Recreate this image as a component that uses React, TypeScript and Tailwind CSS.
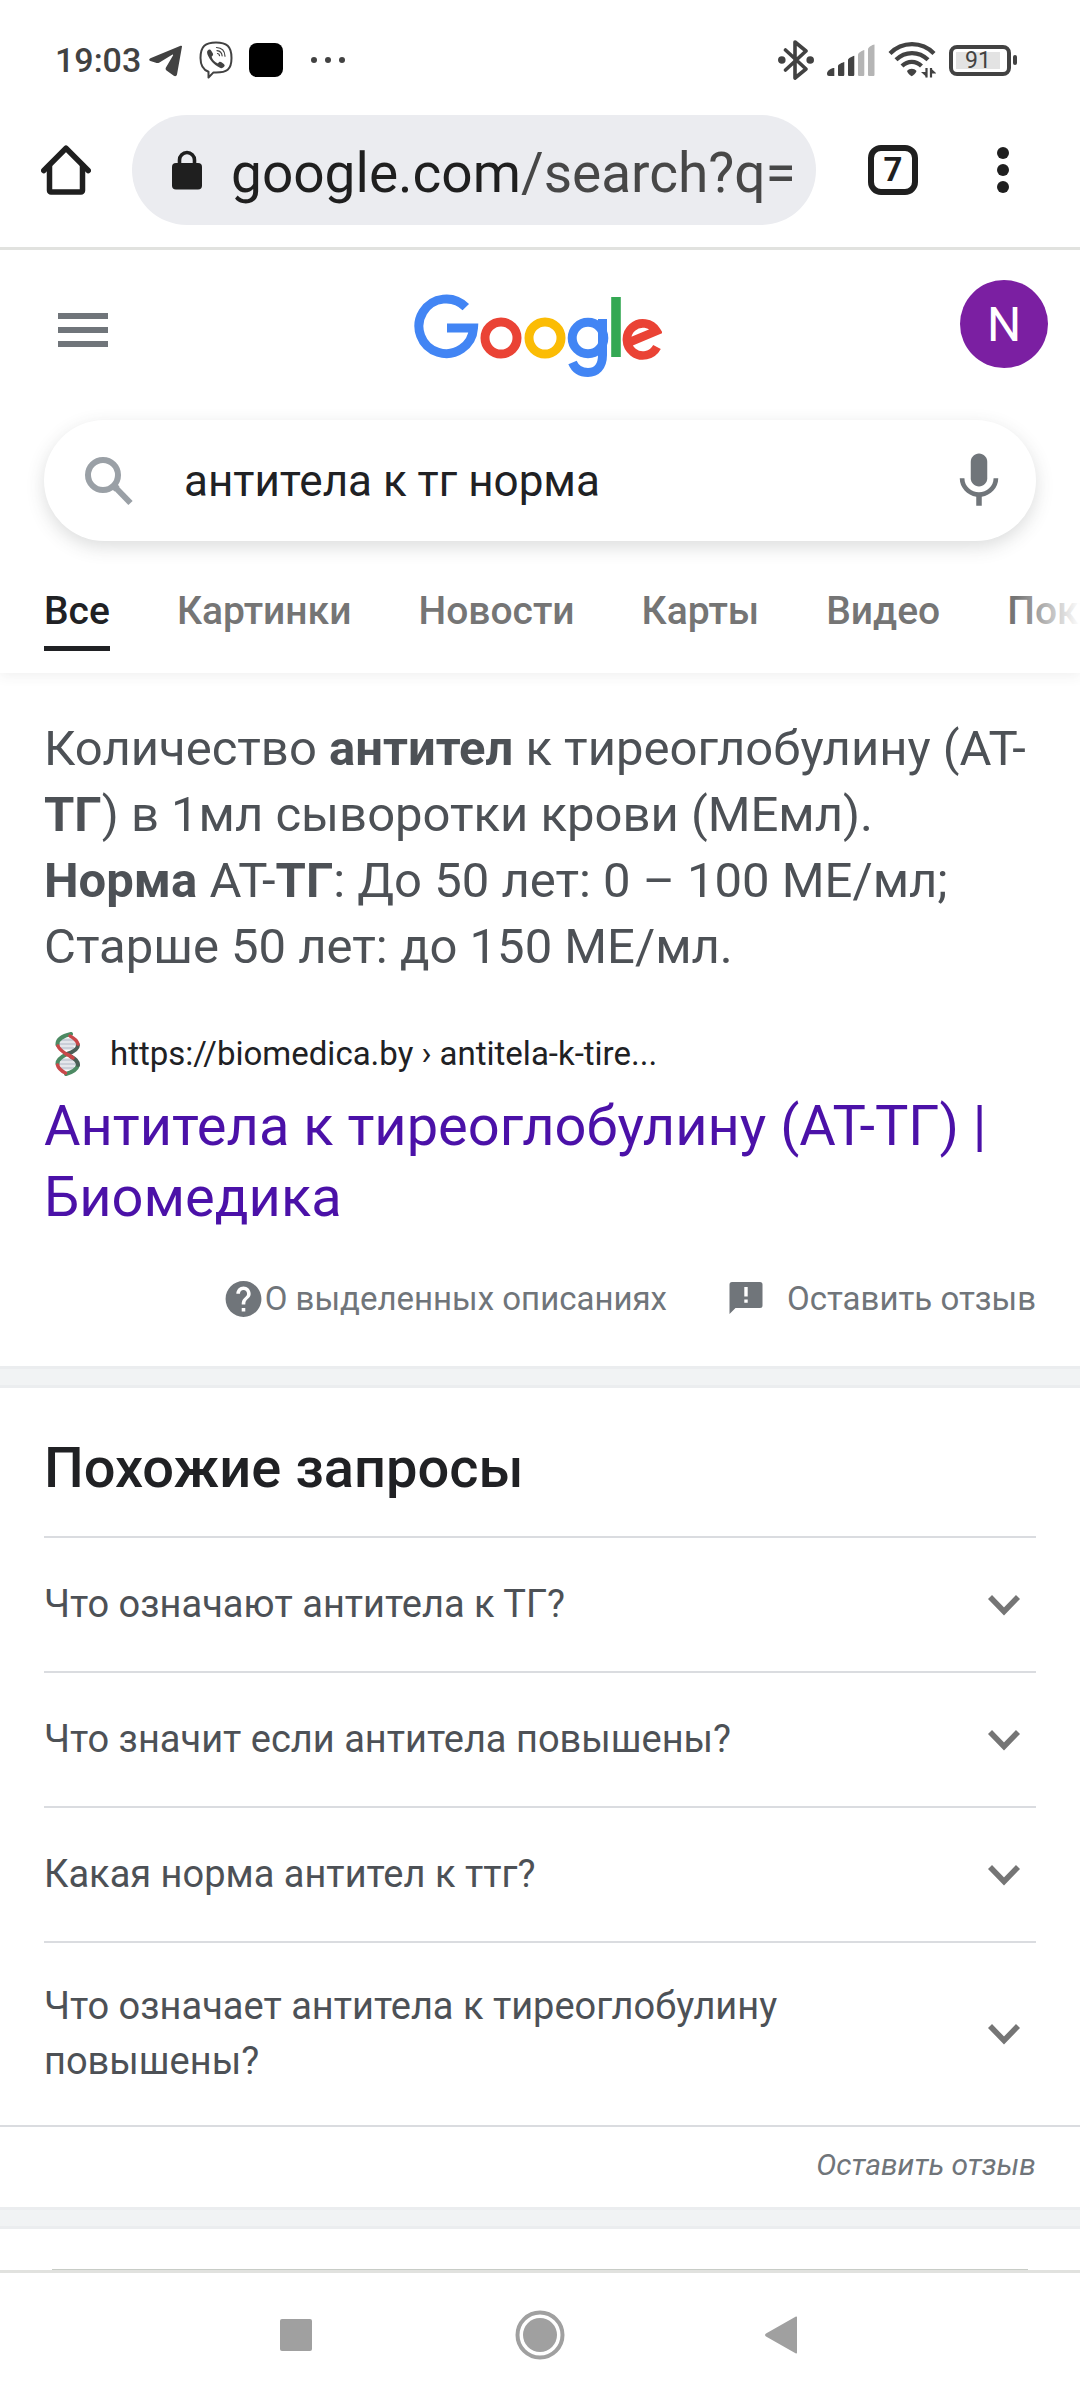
import { useState } from "react";

const tabs = ["Все", "Картинки", "Новости", "Карты", "Видео", "Покупки"];

const questions = [
  "Что означают антитела к ТГ?",
  "Что значит если антитела повышены?",
  "Какая норма антител к ттг?",
  "Что означает антитела к тиреоглобулину повышены?",
];

const StatusBar = () => (
  <div className="flex h-[93px] items-center justify-between pl-[55px] pr-[63px] pt-[27px] text-[#424242]">
    <div className="flex items-center gap-4">
      <span className="-mr-2 text-[34px] leading-10 font-medium">19:03</span>
      <svg className="h-[36px] w-[34px]" viewBox="0 0 34 36" fill="currentColor">
        <path d="M33 4.5 28 32.500c-.4 1.600-1.800 2.200-3.200 1.300L17.500 28.500c-1-.8-1.200-2.200-.4-3.200L24 13.500c.4-.7-.2-1.200-.9-.8L10.500 20.400c-1.200.7-2.400.8-3.600.4L1.400 19c-1.600-.6-1.700-2 0-2.800L31 4c1.300-.6 2.300-.3 2 .5z" />
      </svg>
      <svg className="h-[38px] w-[34px]" viewBox="0 0 34 38" fill="none" stroke="currentColor" strokeLinecap="round" strokeLinejoin="round">
        <path d="M17 1.500c10.500 0 15.500 3.500 15.500 15.500S27.500 31.500 17 31.500l-2.500-.1L9.500 36.500v-5.800C4 28.800 1.500 25 1.500 17 1.500 5 6.500 1.500 17 1.500z" strokeWidth="2" />
        <path d="M8.200 10.300c1.500-2.300 3-2.300 4.200-.3l1.500 2.600c.6 1.300-.2 2.300-1.300 3.200 1 3 3 5.400 6.300 6.600 1.200-1.700 2.200-2 3.600-1.100l2.300 1.700c1.600 1.200.9 2.600-.7 3.600-1.300.8-2.300.7-3.600 0-6-3-9.600-7.300-12-13-.4-1.200-.6-2.200-.3-3.300z" fill="currentColor" stroke="none" />
        <path d="M17.500 6.500c5 .3 8.300 3.500 8.500 8.700M18 9.600c3 .3 4.900 2.200 5.100 5.200M18.500 12.500c1.300.2 1.900.9 2 2.100" strokeWidth="1.200" />
      </svg>
      <div className="h-[34px] w-[34px] rounded-lg bg-black" />
      <svg className="ml-3 h-2 w-[34px]" viewBox="0 0 34 8" fill="currentColor">
        <circle cx="3" cy="4" r="3" />
        <circle cx="17" cy="4" r="3" />
        <circle cx="31" cy="4" r="3" />
      </svg>
    </div>

    <div className="flex items-center gap-[13px]">
      <svg className="h-10 w-9" viewBox="0 0 36 40" fill="none" stroke="currentColor" strokeWidth="3.600" strokeLinecap="round" strokeLinejoin="round">
        <path d="M7.500 10 28 29 17 38V2L28 11 7.500 30" />
        <circle cx="3.800" cy="20" r="2" fill="currentColor" />
        <circle cx="32.200" cy="20" r="2" fill="currentColor" />
      </svg>
      <svg className="h-8 w-12" viewBox="0 0 48 32" fill="currentColor">
        <path d="M0 29.500c0-3 4-5.500 7.300-5.500v8H2c-1.200 0-2-.8-2-2.500z" />
        <path d="M11 22c0-1.500 4-3.500 6.300-4v12.500c0 1-.5 1.500-1.500 1.500h-3.300c-1 0-1.500-.5-1.500-1.500z" />
        <path d="M21 16c0-1.500 4-3.700 6.300-4.200v18.700c0 1-.5 1.500-1.500 1.500h-3.300c-1 0-1.500-.5-1.500-1.500z" />
        <path fill="#b5b5b5" d="M31 10.500C31 9 35 6.500 37.300 6v24.500c0 1-.5 1.500-1.500 1.500h-3.300c-1 0-1.500-.5-1.500-1.500z" />
        <path fill="#b5b5b5" d="M41 5c0-1.500 4-4.200 6.500-4.500v30c0 1-.5 1.500-1.500 1.500h-3.500c-1 0-1.500-.5-1.500-1.500z" />
      </svg>
      <svg className="h-9 w-12" viewBox="0 0 48 36" fill="none" stroke="currentColor" strokeWidth="4.200">
        <path d="M2 11.500C14-1 34-1 46 11.500" />
        <path d="M8 17.800c9-9 23-9 32 0" />
        <path d="M14 24c5.600-5.500 14-5.500 19.500 0" />
        <path d="M19 29c2.500-3 7-3 9.500 0-.5 2-2.800 4.200-4.800 5.200-2-1-4.200-3.200-4.700-5.200z" fill="currentColor" stroke="none" />
        <path d="M38.500 26v9.500M43 35.500V26" strokeWidth="2.200" />
        <path d="M39 35.500 33 30h6zM42.500 26l6 5.500h-6z" fill="currentColor" stroke="none" />
      </svg>
      <div className="flex w-[68px] items-center gap-0.5">
        <div className="flex h-[31px] w-[62px] rounded-[8px] border-4 border-[#424242] p-[3px]">
          <div className="flex w-11 items-center justify-center bg-[#e3e3e3] pt-0.5 text-[23px]">
            <span>91</span>
          </div>
        </div>
        <div className="h-2.5 w-1 rounded-sm bg-[#424242]" />
      </div>
    </div>
  </div>
);

const BrowserBar = () => (
  <div className="flex h-[157px] items-center border-b-3 border-[#e1e2df] pl-[41px] pr-[52px] text-[#1f1f1f]">
    <button aria-label="Главная страница" className="mr-[41px]">
      <svg className="h-[50px] w-[50px]" viewBox="0 0 50 50" fill="none" stroke="currentColor" strokeWidth="5.500" strokeLinejoin="round" strokeLinecap="round">
        <path d="M2.800 25.500 25 3.200l22.200 22.300" />
        <path d="M8.500 21v24.500a1.500 1.500 0 0 0 1.500 1.500h30a1.500 1.500 0 0 0 1.500-1.500V21" />
      </svg>
    </button>
    <button className="flex h-[110px] flex-1 items-center gap-[29px] overflow-hidden rounded-full bg-[#ebecf0] pl-10 text-left">
      <svg className="h-10 w-[30px] shrink-0" viewBox="0 0 30 40">
        <path d="M7.500 15V10a7.500 7.500 0 0 1 15 0v5" fill="none" stroke="currentColor" strokeWidth="3.600" />
        <rect y="13" width="30" height="26.500" rx="4" fill="currentColor" />
      </svg>
      <span className="pt-1.5 text-[55px] leading-[64px] whitespace-nowrap">
        google.com<span className="text-[#474747]">/search?q=</span>
      </span>
    </button>
    <button aria-label="Вкладки" className="ml-[52px] flex h-[50px] w-[50px] items-center justify-center rounded-[13px] border-6 border-[#1f1f1f] text-[33px] font-bold">
      7
    </button>
    <button aria-label="Меню" className="ml-[60px] flex h-[50px] w-[50px] flex-col items-center justify-center gap-[5px]">
      <span className="h-3 w-3 rounded-full bg-[#1f1f1f]" />
      <span className="h-3 w-3 rounded-full bg-[#1f1f1f]" />
      <span className="h-3 w-3 rounded-full bg-[#1f1f1f]" />
    </button>
  </div>
);

const GoogleLogo = () => (
  <svg role="img" aria-label="Google" className="h-[84px] w-[248px]" viewBox="0 0 248 84" fill="none" strokeWidth="9">
    <path stroke="#4285f4" d="M51.800 13.200A27.300 27.300 0 1 0 59.500 34H33" />
    <circle stroke="#ea4335" cx="87" cy="44" r="16" />
    <circle stroke="#fbbc05" cx="131" cy="44" r="16" />
    <circle stroke="#4285f4" cx="174" cy="44" r="15.800" />
    <path stroke="#4285f4" d="M188.500 25v36c0 12-6.500 17.500-14.500 17.500-7.500 0-13-4-15.500-10" />
    <path stroke="#34a853" strokeWidth="9.600" d="M202 3v60" />
    <path stroke="#ea4335" strokeWidth="8.600" d="M243 53a16 16 0 1 1-.5-16L216 48" />
  </svg>
);

const SearchHeader = () => {
  const [query, setQuery] = useState("антитела к тг норма");
  const [active, setActive] = useState("Все");

  return (
    <header className="shadow-[0_3px_12px_rgba(60,64,67,0.08)]">
      <div className="flex h-[150px] items-start justify-between pl-[58px] pr-8 pt-[30px]">
        {/* same width as the avatar keeps the logo centred */}
        <button aria-label="Главное меню" className="flex h-[100px] w-[88px] flex-col justify-center gap-2 text-[#70757a]">
          <span className="h-1.5 w-[50px] bg-current" />
          <span className="h-1.5 w-[50px] bg-current" />
          <span className="h-1.5 w-[50px] bg-current" />
        </button>
        <a href="#home" className="-ml-[30px] mt-3.5">
          <GoogleLogo />
        </a>
        <button aria-label="Аккаунт" className="h-[88px] w-[88px] rounded-full bg-[#7b1fa2] pt-0.5 text-5xl text-white">
          N
        </button>
      </div>

      <div className="px-11 pt-5">
        <div className="flex h-[121px] items-center rounded-full bg-white pl-10 pr-6 shadow-[0_6px_18px_rgba(60,64,67,0.18)]">
          <svg className="h-[50px] w-[50px]" viewBox="0 0 50 50" fill="none" stroke="#9aa0a6" strokeWidth="6">
            <circle cx="19" cy="19" r="15" />
            <path d="m29.500 29.500 17 17.500" />
            <path d="M28 28l5 5" strokeWidth="7" />
          </svg>
          <input
            aria-label="Поиск"
            value={query}
            onChange={(e) => setQuery(e.target.value)}
            className="ml-[50px] min-w-0 flex-1 text-[44px] leading-[60px] text-[#202124] outline-none"
          />
          <button aria-label="Голосовой поиск">
            <svg className="h-[66px] w-[66px]" viewBox="0 0 24 24" fill="#70757a">
              <path d="M12 14c1.660 0 3-1.340 3-3V5c0-1.660-1.340-3-3-3S9 3.340 9 5v6c0 1.660 1.340 3 3 3z" />
              <path d="M17.300 11c0 3-2.540 5.100-5.300 5.100S6.700 14 6.700 11H5c0 3.410 2.720 6.230 6 6.720V21h2v-3.280c3.280-.48 6-3.300 6-6.720z" />
            </svg>
          </button>
        </div>
      </div>

      <nav className="relative overflow-hidden pt-11 pl-11">
        <div className="flex gap-[67px]">
          {tabs.map((tab) => (
            <a
              key={tab}
              href="#tab"
              onClick={() => setActive(tab)}
              className={
                "flex h-[66px] shrink-0 flex-col justify-between border-b-5 text-[39px] leading-[52px] font-medium " +
                (tab === active ? "border-[#202124] text-[#202124]" : "border-transparent text-[#757575]")
              }
            >
              {tab}
            </a>
          ))}
        </div>
        <div className="h-[22px]" />
        <div className="pointer-events-none absolute inset-y-0 right-0 w-16 bg-linear-to-r from-transparent to-white" />
      </nav>
    </header>
  );
};

const Dna = () => (
  <svg className="h-[44px] w-[44px]" viewBox="0 0 44 44" fill="none" strokeLinecap="round">
    <path d="M17 8h13M15 12h18M17 16h12M17 28h12M15 32h18M17 36h13" stroke="#c9ced8" strokeWidth="3" />
    <path d="M27 2c-9 2-14 6-13.500 11M23 22c-6 3-10 6-9.500 10M34 33c-1 4-5 7-12 9" stroke="#4c8a63" strokeWidth="4" />
    <path d="M34 13c0 4-5 7-11 9M34 33c0-4-3-6-7-8.500" stroke="#4a5f57" strokeWidth="4" />
    <path d="M26 4c4 2 7 5 8 8M14 14c1 3 4 5 8 8 3 1 5 2.500 7 4M13.500 33c1 4 4 6 8 8" stroke="#c9484a" strokeWidth="3.500" />
  </svg>
);

const FeaturedSnippet = () => (
  <section className="px-11 pt-[43px]">
    <p className="text-[49px] leading-[66px] text-[#4d5156]">
      Количество <b>антител</b> к тиреоглобулину (АТ-<b>ТГ</b>) в 1мл сыворотки крови (МЕмл).
      <br />
      <b>Норма</b> АТ-<b>ТГ</b>: До 50 лет: 0 – 100 МЕ/мл; Старше 50 лет: до 150 МЕ/мл.
    </p>

    <div className="mt-[52px] flex items-center gap-[22px]">
      <Dna />
      <cite className="text-[33px] leading-[44px] text-[#202124] not-italic">https://biomedica.by › antitela-k-tire...</cite>
    </div>
    <h3 className="mt-[15px] text-[56px] leading-[71px] text-[#4b11a8]">
      <a href="#result">Антитела к тиреоглобулину (АТ-ТГ) | Биомедика</a>
    </h3>

    <div className="mt-11 flex h-[89px] items-start justify-end text-[33px] leading-[44px] text-[#70757a]">
      <a href="#about" className="flex items-center">
        <svg className="h-11 w-[43px]" viewBox="0 0 24 24" fill="currentColor">
          <path d="M12 2C6.480 2 2 6.480 2 12s4.480 10 10 10 10-4.480 10-10S17.520 2 12 2zm1 17h-2v-2h2v2zm2.070-7.750-.9.920C13.450 12.900 13 13.500 13 15h-2v-.5c0-1.100.450-2.100 1.170-2.830l1.240-1.260c.37-.360.590-.860.590-1.410 0-1.100-.9-2-2-2s-2 .9-2 2H8c0-2.210 1.790-4 4-4s4 1.790 4 4c0 .880-.360 1.680-.930 2.250z" />
        </svg>
        О выделенных описаниях
      </a>
      <a href="#feedback" className="ml-[62px] flex items-center gap-6">
        <svg className="h-[34px] w-[34px]" viewBox="0 0 34 34" fill="currentColor">
          <path fillRule="evenodd" d="M3 0h28a2.500 2.500 0 0 1 2.500 2.500v21A2.500 2.500 0 0 1 31 26H6.500L.5 32V2.500A2.500 2.500 0 0 1 3 0zm12.300 5v9.500h3.400V5zm0 12.500v3.300h3.400v-3.300z" />
        </svg>
        Оставить отзыв
      </a>
    </div>
  </section>
);

const Divider = () => <div className="h-[22px] border-y-3 border-[#ebedef] bg-[#f1f3f4]" />;

const RelatedQuestions = () => (
  <section>
    <div className="px-11">
      <h2 className="pt-11 pb-8 text-[56px] leading-[72px] font-medium text-[#202124]">Похожие запросы</h2>
      <ul>
        {questions.map((question) => (
          <li key={question} className="border-t-2 border-[#dadce0]">
            <button
              aria-expanded="false"
              className="flex min-h-[133px] w-full items-center justify-between py-9 pr-4 text-left text-[38px] leading-[55px] text-[#4d5156]"
            >
              <span className="max-w-[800px]">{question}</span>
              <svg className="h-[22px] w-8" viewBox="0 0 32 22" fill="none" stroke="#757575" strokeWidth="5.600">
                <path d="m2 3 14 14.500L30 3" />
              </svg>
            </button>
          </li>
        ))}
      </ul>
    </div>
    <div className="flex h-[82px] items-center justify-end border-t-2 border-[#dadce0] px-11 pb-1">
      <a href="#feedback" className="text-[30px] leading-[40px] text-[#70757a] italic">
        Оставить отзыв
      </a>
    </div>
  </section>
);

const NavigationBar = () => (
  <footer className="grid h-[130px] grid-cols-[1fr_160px_1fr] items-center border-t-3 border-[#e1e2df] pb-1 text-[#a0a0a0]">
    <button aria-label="Недавние" className="mr-[148px] h-8 w-8 justify-self-end rounded-xs bg-current" />
    <button aria-label="Домой" className="justify-self-center">
      <svg className="h-[50px] w-[50px]" viewBox="0 0 50 50" fill="currentColor">
        <circle cx="25" cy="25" r="22.500" fill="none" stroke="currentColor" strokeWidth="4" />
        <circle cx="25" cy="25" r="17" />
      </svg>
    </button>
    <button aria-label="Назад" className="ml-[145px] justify-self-start">
      <svg className="h-[38px] w-8" viewBox="0 0 32 38" fill="currentColor">
        <path d="M30.500.8c1-.6 1.500-.3 1.500.7v35c0 1-.5 1.300-1.500.7L1 20.500c-1.300-.9-1.300-2.100 0-3z" />
      </svg>
    </button>
  </footer>
);

const App = () => {
  return (
    <div className="flex min-h-screen flex-col bg-white font-[Roboto,sans-serif]">
      <StatusBar />
      <BrowserBar />
      <main className="flex flex-1 flex-col overflow-hidden">
        <SearchHeader />
        <FeaturedSnippet />
        <Divider />
        <RelatedQuestions />
        <Divider />
        {/* top edge of the next card */}
        <div className="mx-13 min-h-10 flex-1 border-b border-[#c8ccc6]" />
      </main>
      <NavigationBar />
    </div>
  );
};

export default App;
